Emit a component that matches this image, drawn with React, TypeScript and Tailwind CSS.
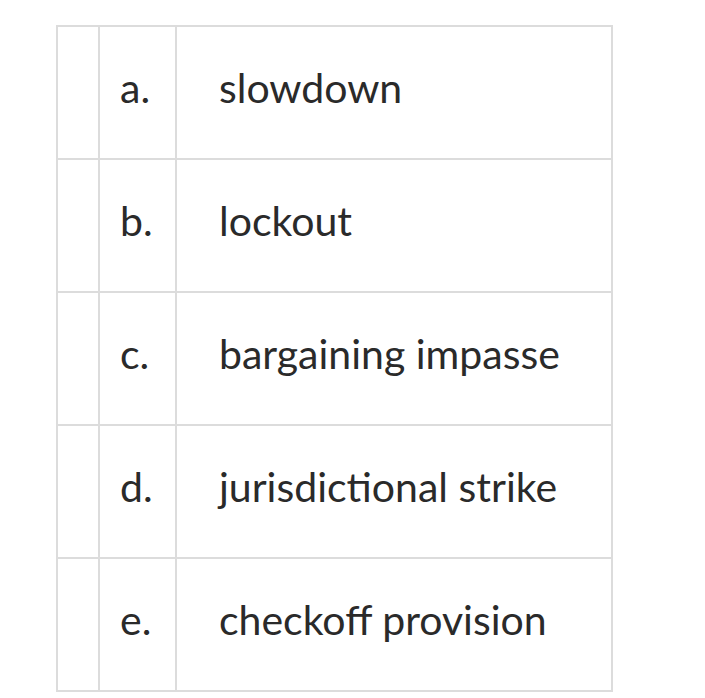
import React from 'react';

const rows = [
  { letter: 'a.', term: 'slowdown' },
  { letter: 'b.', term: 'lockout' },
  { letter: 'c.', term: 'bargaining impasse' },
  { letter: 'd.', term: 'jurisdictional strike' },
  { letter: 'e.', term: 'checkoff provision' },
];

const App: React.FC = () => {
  return (
    <div
      className="min-h-screen bg-white pl-[56px] pt-[25px] text-[#2a2a2a]"
      style={{ fontFamily: 'Lato, "Open Sans", sans-serif' }}
    >
      <table className="w-[557px] border-collapse border-2 border-[#dcdcdc]">
        <tbody>
          {rows.map((row) => (
            <tr key={row.letter} className="h-[133px]">
              <td className="w-[42px] border-2 border-[#dcdcdc]" />
              <td className="w-[77px] border-2 border-[#dcdcdc] pl-[20px] pb-[10px] text-[41px] leading-none">
                {row.letter}
              </td>
              <td className="border-2 border-[#dcdcdc] pl-[42px] pb-[10px] text-[41px] leading-none">
                {row.term}
              </td>
            </tr>
          ))}
        </tbody>
      </table>
    </div>
  );
};

export default App;
